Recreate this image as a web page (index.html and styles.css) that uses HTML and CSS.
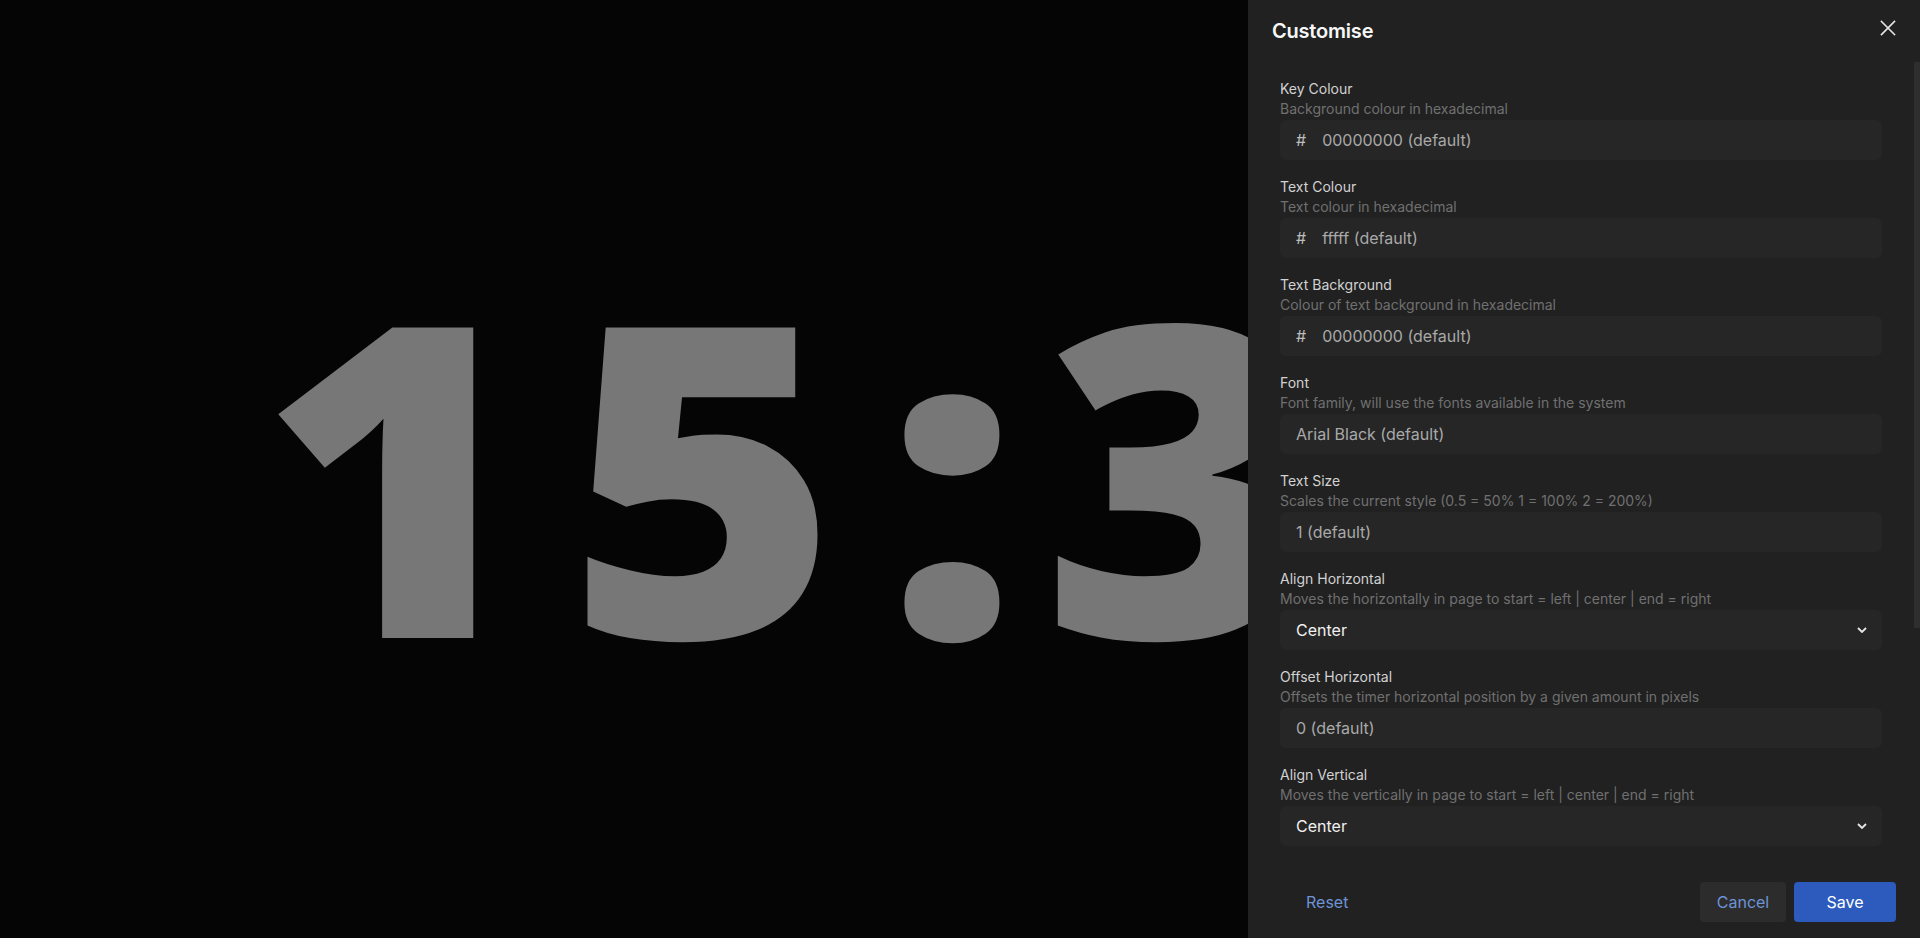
FILE: index.html
```html
<!DOCTYPE html>
<html lang="en">
<head>
<meta charset="utf-8">
<title>Customise</title>
<link rel="stylesheet" href="styles.css">
</head>
<body>
<main class="stage">
  <div class="clock">15<span class="clock-sep">:</span>30</div>
</main>
<aside class="drawer">
  <header class="drawer-header">
    <h2 class="drawer-title">Customise</h2>
    <button class="close-btn" aria-label="Close">
      <svg width="16" height="16" viewBox="0 0 16 16"><path d="M1.5 1.5 L14.5 14.5 M14.5 1.5 L1.5 14.5" stroke="#e6e6e6" stroke-width="1.6" fill="none" stroke-linecap="square"/></svg>
    </button>
  </header>
  <div class="drawer-body">
    <div class="scroll-thumb"></div>
    <div class="field">
      <div class="field-label">Key Colour</div>
      <div class="field-help">Background colour in hexadecimal</div>
      <div class="input"><span class="input-prefix">#</span><span class="placeholder">00000000 (default)</span></div>
    </div>
    <div class="field">
      <div class="field-label">Text Colour</div>
      <div class="field-help">Text colour in hexadecimal</div>
      <div class="input"><span class="input-prefix">#</span><span class="placeholder">fffff (default)</span></div>
    </div>
    <div class="field">
      <div class="field-label">Text Background</div>
      <div class="field-help">Colour of text background in hexadecimal</div>
      <div class="input"><span class="input-prefix">#</span><span class="placeholder">00000000 (default)</span></div>
    </div>
    <div class="field">
      <div class="field-label">Font</div>
      <div class="field-help">Font family, will use the fonts available in the system</div>
      <div class="input"><span class="placeholder">Arial Black (default)</span></div>
    </div>
    <div class="field">
      <div class="field-label">Text Size</div>
      <div class="field-help">Scales the current style (0.5 = 50% 1 = 100% 2 = 200%)</div>
      <div class="input"><span class="placeholder">1 (default)</span></div>
    </div>
    <div class="field">
      <div class="field-label">Align Horizontal</div>
      <div class="field-help">Moves the horizontally in page to start = left | center | end = right</div>
      <div class="input select"><span class="value">Center</span>
        <svg class="chevron" width="10" height="6" viewBox="0 0 10 6"><path d="M1 1 L5 5 L9 1" stroke="#e6e6e6" stroke-width="1.8" fill="none"/></svg>
      </div>
    </div>
    <div class="field">
      <div class="field-label">Offset Horizontal</div>
      <div class="field-help">Offsets the timer horizontal position by a given amount in pixels</div>
      <div class="input"><span class="placeholder">0 (default)</span></div>
    </div>
    <div class="field">
      <div class="field-label">Align Vertical</div>
      <div class="field-help">Moves the vertically in page to start = left | center | end = right</div>
      <div class="input select"><span class="value">Center</span>
        <svg class="chevron" width="10" height="6" viewBox="0 0 10 6"><path d="M1 1 L5 5 L9 1" stroke="#e6e6e6" stroke-width="1.8" fill="none"/></svg>
      </div>
    </div>
  </div>
  <footer class="drawer-footer">
    <button class="btn btn-link">Reset</button>
    <div class="footer-actions">
      <button class="btn btn-cancel">Cancel</button>
      <button class="btn btn-save">Save</button>
    </div>
  </footer>
</aside>
</body>
</html>
```

FILE: styles.css
```css
* { box-sizing: border-box; }

html, body {
  margin: 0;
  padding: 0;
  height: 100%;
  overflow: hidden;
  background: #050505;
  font-family: Inter, "Noto Sans", sans-serif;
}

.stage {
  height: 100vh;
  display: flex;
  align-items: center;
  justify-content: center;
}

.clock {
  font-family: "Open Sans", sans-serif;
  font-weight: 800;
  font-size: 435px;
  line-height: 1;
  color: #777777;
  letter-spacing: 32px;
  padding-left: 32px;
  padding-right: 36px;
  white-space: nowrap;
  transform: scaleX(1.07);
}

.clock-sep {
  margin-left: 11px;
  margin-right: -11px;
}

.drawer {
  position: fixed;
  top: 0;
  right: 0;
  width: 672px;
  height: 100vh;
  background: #212121;
  display: flex;
  flex-direction: column;
}

.drawer-header {
  height: 62px;
  padding: 16px 24px;
  display: flex;
  align-items: flex-start;
}

.drawer-title {
  margin: 0;
  font-size: 20px;
  line-height: 30px;
  font-weight: 600;
  letter-spacing: -0.2px;
  color: #f7f7f7;
}

.close-btn {
  margin: -4px -8px 0 auto;
  width: 32px;
  height: 32px;
  padding: 0;
  border: 0;
  background: transparent;
  display: flex;
  align-items: center;
  justify-content: center;
}

.drawer-body {
  position: relative;
  flex: 1;
  overflow: hidden;
  padding: 17px 38px 0 32px;
  display: flex;
  flex-direction: column;
  gap: 17px;
}

.scroll-thumb {
  position: absolute;
  top: 0;
  right: 0;
  width: 6px;
  height: 566px;
  background: #2e2e2e;
  border-radius: 1px;
}

.field {
  display: flex;
  flex-direction: column;
}

.field-label {
  font-size: 14px;
  line-height: 20px;
  font-weight: 400;
  color: #d2d2d2;
}

.field-help {
  font-size: 14px;
  line-height: 20px;
  color: #707070;
}

.input {
  margin-top: 1px;
  height: 40px;
  background: #262626;
  border-radius: 6px;
  padding: 0 16px;
  display: flex;
  align-items: center;
  font-size: 16px;
}

.input-prefix {
  color: #bdbdbd;
  margin-right: 16px;
}

.placeholder {
  color: #a9a9a9;
}

.select {
  justify-content: space-between;
  padding-right: 15px;
}

.value {
  color: #f0f0f0;
}

.drawer-footer {
  height: 72px;
  padding: 16px 24px;
  display: flex;
  align-items: center;
  justify-content: space-between;
}

.footer-actions {
  display: flex;
  gap: 8px;
}

.btn {
  height: 40px;
  border: 0;
  border-radius: 4px;
  font-family: Inter, "Noto Sans", sans-serif;
  font-size: 16px;
  font-weight: 400;
  padding: 0 16px;
  cursor: pointer;
}

.btn-link {
  background: transparent;
  color: #6d93d6;
  margin-left: 18px;
}

.btn-cancel {
  width: 86px;
  background: #2c2c2c;
  color: #6d93d6;
}

.btn-save {
  width: 102px;
  background: #2c5bbd;
  color: #ffffff;
}
```
